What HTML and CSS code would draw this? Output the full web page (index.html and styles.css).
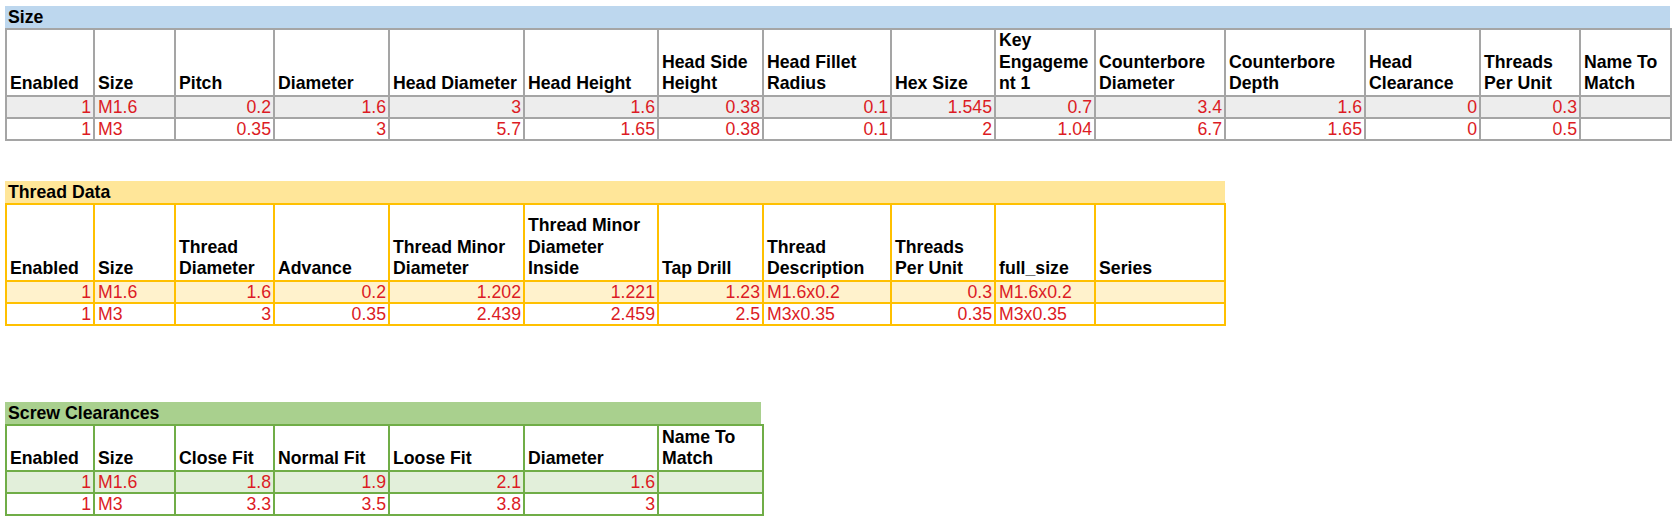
FILE: index.html
```html
<!DOCTYPE html>
<html>
<head>
<meta charset="utf-8">
<link rel="stylesheet" href="styles.css">
</head>
<body>
<div class="sheet">
  <section class="block size">
    <div class="title">Size</div>
    <table>
      <colgroup>
        <col class="c1"><col class="c2"><col class="c3"><col class="c4"><col class="c5"><col class="c6"><col class="c7"><col class="c8"><col class="c9"><col class="c10"><col class="c11"><col class="c12"><col class="c13"><col class="c14"><col class="c15">
      </colgroup>
      <tr class="head">
        <th>Enabled</th><th>Size</th><th>Pitch</th><th>Diameter</th><th>Head Diameter</th><th>Head Height</th><th>Head Side<br>Height</th><th>Head Fillet<br>Radius</th><th>Hex Size</th><th>Key<br>Engageme<br>nt 1</th><th>Counterbore<br>Diameter</th><th>Counterbore<br>Depth</th><th>Head<br>Clearance</th><th>Threads<br>Per Unit</th><th>Name To<br>Match</th>
      </tr>
      <tr class="row odd">
        <td class="n">1</td><td>M1.6</td><td class="n">0.2</td><td class="n">1.6</td><td class="n">3</td><td class="n">1.6</td><td class="n">0.38</td><td class="n">0.1</td><td class="n">1.545</td><td class="n">0.7</td><td class="n">3.4</td><td class="n">1.6</td><td class="n">0</td><td class="n">0.3</td><td></td>
      </tr>
      <tr class="row">
        <td class="n">1</td><td>M3</td><td class="n">0.35</td><td class="n">3</td><td class="n">5.7</td><td class="n">1.65</td><td class="n">0.38</td><td class="n">0.1</td><td class="n">2</td><td class="n">1.04</td><td class="n">6.7</td><td class="n">1.65</td><td class="n">0</td><td class="n">0.5</td><td></td>
      </tr>
    </table>
  </section>

  <section class="block thread">
    <div class="title">Thread Data</div>
    <table>
      <colgroup>
        <col class="c1"><col class="c2"><col class="c3"><col class="c4"><col class="c5"><col class="c6"><col class="c7"><col class="c8"><col class="c9"><col class="c10"><col class="c11">
      </colgroup>
      <tr class="head">
        <th>Enabled</th><th>Size</th><th>Thread<br>Diameter</th><th>Advance</th><th>Thread Minor<br>Diameter</th><th>Thread Minor<br>Diameter<br>Inside</th><th>Tap Drill</th><th>Thread<br>Description</th><th>Threads<br>Per Unit</th><th>full_size</th><th>Series</th>
      </tr>
      <tr class="row odd">
        <td class="n">1</td><td>M1.6</td><td class="n">1.6</td><td class="n">0.2</td><td class="n">1.202</td><td class="n">1.221</td><td class="n">1.23</td><td>M1.6x0.2</td><td class="n">0.3</td><td>M1.6x0.2</td><td></td>
      </tr>
      <tr class="row">
        <td class="n">1</td><td>M3</td><td class="n">3</td><td class="n">0.35</td><td class="n">2.439</td><td class="n">2.459</td><td class="n">2.5</td><td>M3x0.35</td><td class="n">0.35</td><td>M3x0.35</td><td></td>
      </tr>
    </table>
  </section>

  <section class="block screw">
    <div class="title">Screw Clearances</div>
    <table>
      <colgroup>
        <col class="c1"><col class="c2"><col class="c3"><col class="c4"><col class="c5"><col class="c6"><col class="c7">
      </colgroup>
      <tr class="head">
        <th>Enabled</th><th>Size</th><th>Close Fit</th><th>Normal Fit</th><th>Loose Fit</th><th>Diameter</th><th>Name To<br>Match</th>
      </tr>
      <tr class="row odd">
        <td class="n">1</td><td>M1.6</td><td class="n">1.8</td><td class="n">1.9</td><td class="n">2.1</td><td class="n">1.6</td><td></td>
      </tr>
      <tr class="row">
        <td class="n">1</td><td>M3</td><td class="n">3.3</td><td class="n">3.5</td><td class="n">3.8</td><td class="n">3</td><td></td>
      </tr>
    </table>
  </section>
</div>
</body>
</html>
```

FILE: styles.css
```css
html, body {
  margin: 0;
  padding: 0;
  background: #ffffff;
}

body {
  font-family: "Liberation Sans", Arial, sans-serif;
  font-size: 17.7px;
  color: #000;
}

.sheet {
  padding: 6px 0 0 5px;
}

.block .title {
  height: 22px;
  line-height: 22px;
  font-weight: bold;
  padding-left: 3px;
  box-sizing: border-box;
}

.size { width: 1665px; margin-bottom: 40px; }
.thread { width: 1220px; margin-bottom: 76px; }
.screw { width: 756px; }

table {
  border-collapse: collapse;
  table-layout: fixed;
  width: 100%;
}

.c1 { width: 88px; }
.c2 { width: 81px; }
.c3 { width: 99px; }
.c4 { width: 115px; }
.c5 { width: 135px; }
.c6 { width: 134px; }
.c7 { width: 105px; }
.c8 { width: 128px; }
.c9 { width: 104px; }
.c10 { width: 100px; }
.c11 { width: 130px; }
.c12 { width: 140px; }
.c13 { width: 115px; }
.c14 { width: 100px; }
.c15 { width: 91px; }

th, td {
  border: 2px solid #a5a5a5;
  padding: 0 2px 0 3px;
  white-space: nowrap;
  overflow: hidden;
}

th {
  font-weight: bold;
  text-align: left;
  vertical-align: bottom;
  line-height: 21.5px;
  padding-bottom: 0;
}

td {
  color: #dc1b24;
  line-height: 20px;
  vertical-align: middle;
}

td.n {
  text-align: right;
  padding-right: 2px;
}

.row { height: 22px; }

.size .head { height: 65px; }
.thread .head { height: 77px; }
.screw .head { height: 46px; }

/* Size: blue / gray */
.size .title { background: #bdd7ee; }
.size th, .size td { border-color: #a5a5a5; }
.size .odd td { background: #ededed; }

/* Thread: gold */
.thread .title { background: #ffe699; }
.thread th, .thread td { border-color: #ffc000; }
.thread .odd td { background: #fff2cc; }

/* Screw: green */
.screw .title { background: #a9d08e; }
.screw th, .screw td { border-color: #70ad47; }
.screw .odd td { background: #e2efda; }
```
